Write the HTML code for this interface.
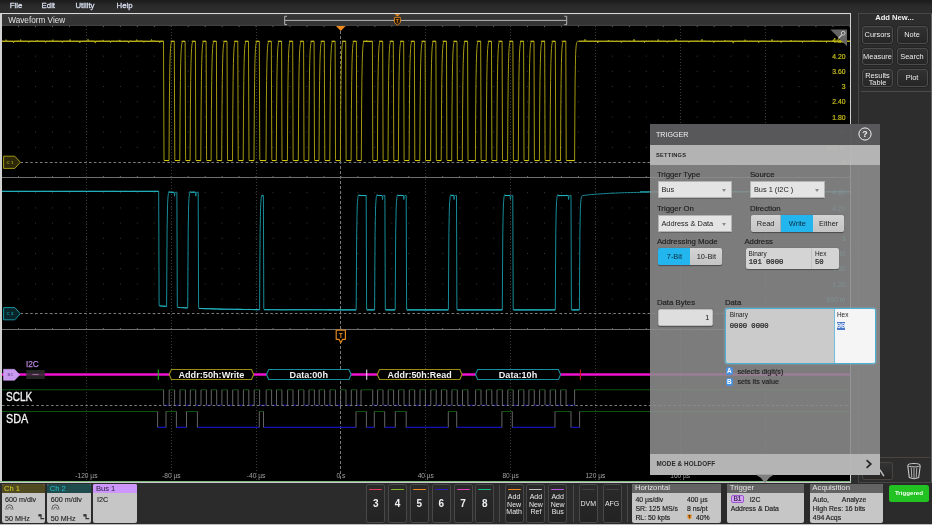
<!DOCTYPE html>
<html lang="en"><head><meta charset="utf-8"><title>Oscilloscope - Trigger</title>
<style>
*{box-sizing:border-box;margin:0;padding:0}
html,body{width:932px;height:525px;overflow:hidden;background:#2c2c2c}
body{position:relative;font-family:"Liberation Sans",sans-serif;color:#e8e8e8;font-size:8px;line-height:1}
.abs{position:absolute}
/* menu */
#menubar{position:absolute;left:0;top:0;width:932px;height:13px;background:linear-gradient(#1b1b1b,#2a2a2a 45%,#2e2e2e)}
#menubar span{position:absolute;top:1.5px;font-size:7.8px;font-weight:normal;-webkit-text-stroke:.3px #d6dcec;color:#d6dcec}
/* waveform view */
#wv{position:absolute;left:0;top:13px;width:851.4px;height:470px;border:1.4px solid #dadada;border-right:1.8px solid #cfcfcf;border-left:2px solid #d2d2d2;border-bottom:none;background:#000}
#wvtitle{position:absolute;left:2px;top:14.4px;width:848px;height:11.6px;background:linear-gradient(#3c3c3c,#343434 25%,#333 85%,#454545)}
#wvtitle span{position:absolute;left:6.3px;top:2.5px;font-size:8.2px;color:#e2e2e2}
#wvbot1{position:absolute;left:0px;top:481px;width:851px;height:1px;background:#7fb87f}
#wvbot2{position:absolute;left:0px;top:482px;width:851px;height:1px;background:#c8c8c8}
/* right panel */
#rp{position:absolute;left:858px;top:13px;width:74px;height:470px;border:1px solid #464646;border-right:1.6px solid #626262;background:#2d2d2d}
#rp .ttl{position:absolute;left:0;top:-0.5px;width:71px;text-align:center;font-size:7.6px;font-weight:bold;color:#f0f0f0}
.rbtn{position:absolute;width:31px;height:17.6px;border:1px solid #4c4c4c;border-radius:3px;background:linear-gradient(#323232,#262626);color:#ececec;font-size:7.4px;text-align:center;line-height:15.6px;box-shadow:0 0 0 .5px #1c1c1c}
.rbtn.two{line-height:7.2px;padding-top:1.5px}
#rpsep1{position:absolute;left:2px;top:77px;width:70px;height:1px;background:#4a4a4a}
#rpsep2{position:absolute;left:0px;top:443.4px;width:71px;height:1px;background:#4a4440}
/* bottom bar */
#bb{position:absolute;left:0;top:483px;width:932px;height:42px;background:#2b2b2b}
#bbline{position:absolute;left:0;top:524px;width:932px;height:1px;background:#bdbdbd}
.badge{position:absolute;top:484px;height:39px;background:#c6c6c6;border-radius:2px;overflow:hidden;color:#222;font-size:7.2px;-webkit-text-stroke:.12px #222}
.badge .hd{position:absolute;left:0;top:0;right:0;height:9px;font-size:7.6px;padding:0.8px 0 0 2.5px;-webkit-text-stroke:0}
.badge .l{position:absolute;left:3.5px;white-space:nowrap}
.nbtn{position:absolute;top:484px;width:19px;height:39px;border:1px solid #484848;border-radius:2.5px;background:linear-gradient(#2a2a2a,#232323);color:#f0f0f0;text-align:center}
.nbtn i{position:absolute;left:2px;right:2px;top:3.6px;height:1.3px;border-radius:1px}
.nbtn b{position:absolute;left:0;right:0;top:13.5px;font-size:10px;font-weight:bold;color:#eef0f4}
.nbtn.t3{font-size:7px;line-height:7.6px}
.nbtn.t3 span{position:absolute;left:-2px;right:-2px;top:8px;color:#e8e8e8}
.nbtn.t1 span{position:absolute;left:-2px;right:-2px;top:15px;font-size:7px;color:#e8e8e8}
.vsep{position:absolute;top:485px;width:1px;height:37px;background:#4a4a4a}
.info{position:absolute;top:484px;height:39px;background:#c6c6c6;border-radius:2px;overflow:hidden;color:#1c1c1c;font-size:6.9px;-webkit-text-stroke:.15px #1c1c1c}
.info .hd{position:absolute;left:0;top:0;right:0;height:8.6px;background:#636363;color:#e6e6e6;font-size:7.8px;padding:0.4px 0 0 2.5px;-webkit-text-stroke:0}
.info .l{position:absolute;white-space:nowrap;margin-top:.8px}
#trigd{position:absolute;left:889px;top:485px;width:40px;height:17px;border-radius:2.5px;background:#23c223;color:#f4fff4;font-weight:bold;font-size:6.2px;text-align:center;line-height:16.5px}
/* trigger panel */
#tp{position:absolute;left:650.4px;top:124px;width:230px;height:350.6px}
#tp .hdr{position:absolute;left:0;top:0;width:230px;height:20.5px;background:rgba(89,89,92,.985)}
#tp .hdr span{position:absolute;left:5.2px;top:6.7px;font-size:8.1px;color:#f2f2f2;transform:scaleX(.875);transform-origin:0 0}
#tp .set{position:absolute;left:0;top:20.5px;width:230px;height:20.5px;background:rgba(183,183,183,.975)}
#tp .set span{position:absolute;left:5.6px;top:8.7px;font-size:5.7px;font-weight:bold;color:#262626;letter-spacing:.22px}
#tp .body{position:absolute;left:0;top:41px;width:230px;height:289px;background:rgba(141,141,141,.88)}
#tp .mh{position:absolute;left:0;top:330px;width:230px;height:20.6px;background:rgba(184,184,184,.975)}
#tp .mh span{position:absolute;left:6px;top:6.6px;font-size:6.3px;font-weight:bold;color:#2a2a2a;letter-spacing:.1px}
.lbl{position:absolute;font-size:7.8px;color:#1a1a1a;white-space:nowrap;-webkit-text-stroke:.12px #1a1a1a}
.dd{position:absolute;height:17px;background:#e4e4e4;border:1px solid #b4b4b4;box-shadow:0 .5px .8px rgba(0,0,0,.2);font-size:7.4px;color:#1c1c1c;line-height:15px;padding-left:2.5px;white-space:nowrap}
.dd:after{content:"";position:absolute;right:5px;top:6.5px;border-left:2.2px solid transparent;border-right:2.2px solid transparent;border-top:3.4px solid #8a8a8a}
.seg{position:absolute;height:17.2px;display:flex;border-radius:2px;overflow:hidden;box-shadow:0 .5px 1px rgba(0,0,0,.4)}
.seg div{height:17.2px;background:linear-gradient(#d4d4d4,#c4c4c4);color:#222;font-size:7.4px;text-align:center;line-height:17.4px;border-right:1px solid #aaa}
.seg div.on{background:#22b5ee;color:#0c2c3c;border-right:none}
.seg div:last-child{border-right:none}
.fld{position:absolute;background:#d4d4d4;border-radius:2px;box-shadow:0 .5px 1px rgba(0,0,0,.35)}
.mono{font-family:"Liberation Mono",monospace;-webkit-text-stroke:.2px #1a1a1a}

#root{position:absolute;left:0;top:0;width:932px;height:525px;will-change:transform;transform:translateZ(0)}

</style></head>
<body>
<div id="root">
<div id="menubar"><span style="left:9.8px">File</span><span style="left:41.6px">Edit</span><span style="left:75.4px">Utility</span><span style="left:116.6px">Help</span></div>
<div id="wv"></div>
<div id="wvtitle"><span>Waveform View</span></div>
<svg class="abs" style="left:270px;top:13px" width="320" height="14" viewBox="270 13 320 14">
<path d="M287 16.3 H284.7 V24.6 H287 M284.7 20.4 H566.7 M564.4 16.3 H566.7 V24.6 H564.4" fill="none" stroke="#b4b4b4" stroke-width="1"/>
<path d="M394.6 14.2 H400.2 L397.4 16.6 Z" fill="#f08a1c"/>
<path d="M394.4 17.4 H400.4 V22.6 L397.4 25 L394.4 22.6 Z" fill="#241808" stroke="#e2861c" stroke-width="0.9" stroke-linejoin="round"/>
<text x="397.4" y="22.6" text-anchor="middle" font-family="Liberation Sans, sans-serif" font-weight="bold" font-size="5" fill="#e2861c">T</text>
</svg>
<svg class="plot" width="848" height="456" viewBox="2 26 848 456" style="position:absolute;left:2px;top:26px">
<rect x="1" y="26" width="850" height="456" fill="#000"/>
<path d="M1.1 41 H851" stroke="#3a3a3a" stroke-width="1" stroke-dasharray="1 15.966" fill="none"/>
<path d="M1.1 56.2 H851" stroke="#3a3a3a" stroke-width="1" stroke-dasharray="1 15.966" fill="none"/>
<path d="M1.1 71.3 H851" stroke="#3a3a3a" stroke-width="1" stroke-dasharray="1 15.966" fill="none"/>
<path d="M1.1 86.5 H851" stroke="#3a3a3a" stroke-width="1" stroke-dasharray="1 15.966" fill="none"/>
<path d="M1.1 101.8 H851" stroke="#3a3a3a" stroke-width="1" stroke-dasharray="1 15.966" fill="none"/>
<path d="M1.1 117 H851" stroke="#3a3a3a" stroke-width="1" stroke-dasharray="1 15.966" fill="none"/>
<path d="M1.1 132.2 H851" stroke="#3a3a3a" stroke-width="1" stroke-dasharray="1 15.966" fill="none"/>
<path d="M1.1 147.3 H851" stroke="#3a3a3a" stroke-width="1" stroke-dasharray="1 15.966" fill="none"/>
<path d="M1.1 162.6 H851" stroke="#3a3a3a" stroke-width="1" stroke-dasharray="1 15.966" fill="none"/>
<path d="M1.1 192.7 H851" stroke="#3a3a3a" stroke-width="1" stroke-dasharray="1 15.966" fill="none"/>
<path d="M1.1 207.9 H851" stroke="#3a3a3a" stroke-width="1" stroke-dasharray="1 15.966" fill="none"/>
<path d="M1.1 223.1 H851" stroke="#3a3a3a" stroke-width="1" stroke-dasharray="1 15.966" fill="none"/>
<path d="M1.1 238.3 H851" stroke="#3a3a3a" stroke-width="1" stroke-dasharray="1 15.966" fill="none"/>
<path d="M1.1 253.5 H851" stroke="#3a3a3a" stroke-width="1" stroke-dasharray="1 15.966" fill="none"/>
<path d="M1.1 268.7 H851" stroke="#3a3a3a" stroke-width="1" stroke-dasharray="1 15.966" fill="none"/>
<path d="M1.1 283.9 H851" stroke="#3a3a3a" stroke-width="1" stroke-dasharray="1 15.966" fill="none"/>
<path d="M1.1 299.1 H851" stroke="#3a3a3a" stroke-width="1" stroke-dasharray="1 15.966" fill="none"/>
<path d="M1.1 314.3 H851" stroke="#3a3a3a" stroke-width="1" stroke-dasharray="1 15.966" fill="none"/>
<path d="M1.1 26.6 H851" stroke="#6a6a6a" stroke-width="1" stroke-dasharray="1 15.966" fill="none"/>
<path d="M1.1 176.6 H851" stroke="#6a6a6a" stroke-width="1" stroke-dasharray="1 15.966" fill="none"/>
<path d="M1.1 328.6 H851" stroke="#6a6a6a" stroke-width="1" stroke-dasharray="1 15.966" fill="none"/>
<path d="M86.5 26 V482" stroke="#3a3a3a" stroke-width="1" stroke-dasharray="1 2" fill="none"/>
<path d="M171.5 26 V482" stroke="#3a3a3a" stroke-width="1" stroke-dasharray="1 2" fill="none"/>
<path d="M256.5 26 V482" stroke="#3a3a3a" stroke-width="1" stroke-dasharray="1 2" fill="none"/>
<path d="M425.5 26 V482" stroke="#3a3a3a" stroke-width="1" stroke-dasharray="1 2" fill="none"/>
<path d="M510.5 26 V482" stroke="#3a3a3a" stroke-width="1" stroke-dasharray="1 2" fill="none"/>
<path d="M595.5 26 V482" stroke="#3a3a3a" stroke-width="1" stroke-dasharray="1 2" fill="none"/>
<path d="M680.5 26 V482" stroke="#3a3a3a" stroke-width="1" stroke-dasharray="1 2" fill="none"/>
<path d="M765.5 26 V482" stroke="#3a3a3a" stroke-width="1" stroke-dasharray="1 2" fill="none"/>
<path d="M340.5 26 V482" stroke="#7a7a7a" stroke-width="1" stroke-dasharray="3 2" fill="none"/>
<path d="M1 177.5 H851" stroke="#6e6e6e" stroke-width="1.2" fill="none"/>
<path d="M1 329.5 H851" stroke="#6e6e6e" stroke-width="1.2" fill="none"/>
<path d="M20.4 162.5 H851" stroke="#7c7c7c" stroke-width="1" stroke-dasharray="2.6 2.3" fill="none"/>
<path d="M20.4 313.5 H851" stroke="#7c7c7c" stroke-width="1" stroke-dasharray="2.6 2.3" fill="none"/>
<path d="M2 374.5 H851" stroke="#f010d0" stroke-width="2.4" fill="none"/>
<path d="M2 389.8 H163.6 M169.2 389.8 H174.6 M180 389.8 H185.4 M190.3 389.8 H195.7 M201 389.8 H206.4 M211.3 389.8 H216.7 M221.9 389.8 H227.3 M232.7 389.8 H238.1 M243.4 389.8 H248.8 M254.2 389.8 H259.6 M266.2 389.8 H271.6 M276.5 389.8 H281.9 M287.6 389.8 H293 M298.5 389.8 H303.9 M309 389.8 H314.4 M319.2 389.8 H324.6 M330 389.8 H335.4 M340.6 389.8 H346 M351.3 389.8 H356.7 M361 389.8 H372.7 M377.6 389.8 H383 M388.2 389.8 H393.6 M398.6 389.8 H404 M409.3 389.8 H414.7 M420 389.8 H425.4 M430.8 389.8 H436.2 M441.4 389.8 H446.8 M451.9 389.8 H457.3 M462.5 389.8 H467.9 M475.6 389.8 H481 M486.4 389.8 H491.8 M497 389.8 H502.4 M507.8 389.8 H513.2 M518.5 389.8 H523.9 M528.9 389.8 H534.3 M539.6 389.8 H545 M550.2 389.8 H555.6 M560.7 389.8 H566.1 M574.6 389.8 H850" stroke="#0b540b" stroke-width="1.1" fill="none"/>
<path d="M163.6 405.2 H169.2 M174.6 405.2 H180 M185.4 405.2 H190.3 M195.7 405.2 H201 M206.4 405.2 H211.3 M216.7 405.2 H221.9 M227.3 405.2 H232.7 M238.1 405.2 H243.4 M248.8 405.2 H254.2 M259.6 405.2 H266.2 M271.6 405.2 H276.5 M281.9 405.2 H287.6 M293 405.2 H298.5 M303.9 405.2 H309 M314.4 405.2 H319.2 M324.6 405.2 H330 M335.4 405.2 H340.6 M346 405.2 H351.3 M356.7 405.2 H361 M372.7 405.2 H377.6 M383 405.2 H388.2 M393.6 405.2 H398.6 M404 405.2 H409.3 M414.7 405.2 H420 M425.4 405.2 H430.8 M436.2 405.2 H441.4 M446.8 405.2 H451.9 M457.3 405.2 H462.5 M467.9 405.2 H475.6 M481 405.2 H486.4 M491.8 405.2 H497 M502.4 405.2 H507.8 M513.2 405.2 H518.5 M523.9 405.2 H528.9 M534.3 405.2 H539.6 M545 405.2 H550.2 M555.6 405.2 H560.7 M566.1 405.2 H574.6" stroke="#1212b8" stroke-width="1.1" fill="none"/>
<path d="M163.6 389.8 V405.2 M169.2 389.8 V405.2 M174.6 389.8 V405.2 M180 389.8 V405.2 M185.4 389.8 V405.2 M190.3 389.8 V405.2 M195.7 389.8 V405.2 M201 389.8 V405.2 M206.4 389.8 V405.2 M211.3 389.8 V405.2 M216.7 389.8 V405.2 M221.9 389.8 V405.2 M227.3 389.8 V405.2 M232.7 389.8 V405.2 M238.1 389.8 V405.2 M243.4 389.8 V405.2 M248.8 389.8 V405.2 M254.2 389.8 V405.2 M259.6 389.8 V405.2 M266.2 389.8 V405.2 M271.6 389.8 V405.2 M276.5 389.8 V405.2 M281.9 389.8 V405.2 M287.6 389.8 V405.2 M293 389.8 V405.2 M298.5 389.8 V405.2 M303.9 389.8 V405.2 M309 389.8 V405.2 M314.4 389.8 V405.2 M319.2 389.8 V405.2 M324.6 389.8 V405.2 M330 389.8 V405.2 M335.4 389.8 V405.2 M340.6 389.8 V405.2 M346 389.8 V405.2 M351.3 389.8 V405.2 M356.7 389.8 V405.2 M361 389.8 V405.2 M372.7 389.8 V405.2 M377.6 389.8 V405.2 M383 389.8 V405.2 M388.2 389.8 V405.2 M393.6 389.8 V405.2 M398.6 389.8 V405.2 M404 389.8 V405.2 M409.3 389.8 V405.2 M414.7 389.8 V405.2 M420 389.8 V405.2 M425.4 389.8 V405.2 M430.8 389.8 V405.2 M436.2 389.8 V405.2 M441.4 389.8 V405.2 M446.8 389.8 V405.2 M451.9 389.8 V405.2 M457.3 389.8 V405.2 M462.5 389.8 V405.2 M467.9 389.8 V405.2 M475.6 389.8 V405.2 M481 389.8 V405.2 M486.4 389.8 V405.2 M491.8 389.8 V405.2 M497 389.8 V405.2 M502.4 389.8 V405.2 M507.8 389.8 V405.2 M513.2 389.8 V405.2 M518.5 389.8 V405.2 M523.9 389.8 V405.2 M528.9 389.8 V405.2 M534.3 389.8 V405.2 M539.6 389.8 V405.2 M545 389.8 V405.2 M550.2 389.8 V405.2 M555.6 389.8 V405.2 M560.7 389.8 V405.2 M566.1 389.8 V405.2 M574.6 389.8 V405.2" stroke="#767676" stroke-width="0.85" fill="none"/>
<path d="M2 405.5 H851" stroke="#7c7c7c" stroke-width="1" stroke-dasharray="2.6 2.3" fill="none"/>
<path d="M2 411.5 H157.6 M166 411.5 H176.4 M186.5 411.5 H197.4 M259.3 411.5 H263.5 M356 411.5 H366.4 M374.3 411.5 H384.7 M395.3 411.5 H406.2 M448.3 411.5 H456.7 M501.9 411.5 H512.3 M555 411.5 H571 M579.6 411.5 H850" stroke="#0b540b" stroke-width="1.1" fill="none"/>
<path d="M157.6 427.4 H166 M176.4 427.4 H186.5 M197.4 427.4 H259.3 M263.5 427.4 H356 M366.4 427.4 H374.3 M384.7 427.4 H395.3 M406.2 427.4 H448.3 M456.7 427.4 H501.9 M512.3 427.4 H555 M571 427.4 H579.6" stroke="#1212b8" stroke-width="1.1" fill="none"/>
<path d="M157.6 411.5 V427.4 M166 411.5 V427.4 M176.4 411.5 V427.4 M186.5 411.5 V427.4 M197.4 411.5 V427.4 M259.3 411.5 V427.4 M263.5 411.5 V427.4 M356 411.5 V427.4 M366.4 411.5 V427.4 M374.3 411.5 V427.4 M384.7 411.5 V427.4 M395.3 411.5 V427.4 M406.2 411.5 V427.4 M448.3 411.5 V427.4 M456.7 411.5 V427.4 M501.9 411.5 V427.4 M512.3 411.5 V427.4 M555 411.5 V427.4 M571 411.5 V427.4 M579.6 411.5 V427.4" stroke="#767676" stroke-width="0.85" fill="none"/>
<path d="M169.2 374.5 L171.4 369.5 L251.5 369.5 L253.7 374.5 L251.5 379.5 L171.4 379.5 Z" fill="#000" stroke="#988e12" stroke-width="1.1" stroke-linejoin="round"/>
<text x="211.4" y="377.7" text-anchor="middle" font-family="Liberation Sans, sans-serif" font-weight="bold" font-size="8.9" textLength="66" lengthAdjust="spacingAndGlyphs" fill="#f2f2f2">Addr:50h:Write</text>
<path d="M266.5 374.5 L268.7 369.5 L348.9 369.5 L351.1 374.5 L348.9 379.5 L268.7 379.5 Z" fill="#000" stroke="#168e9c" stroke-width="1.1" stroke-linejoin="round"/>
<text x="308.8" y="377.7" text-anchor="middle" font-family="Liberation Sans, sans-serif" font-weight="bold" font-size="8.9" textLength="38.4" lengthAdjust="spacingAndGlyphs" fill="#f2f2f2">Data:00h</text>
<path d="M377.3 374.5 L379.5 369.5 L459.8 369.5 L462 374.5 L459.8 379.5 L379.5 379.5 Z" fill="#000" stroke="#988e12" stroke-width="1.1" stroke-linejoin="round"/>
<text x="419.6" y="377.7" text-anchor="middle" font-family="Liberation Sans, sans-serif" font-weight="bold" font-size="8.9" textLength="64" lengthAdjust="spacingAndGlyphs" fill="#f2f2f2">Addr:50h:Read</text>
<path d="M475.5 374.5 L477.7 369.5 L558.4 369.5 L560.6 374.5 L558.4 379.5 L477.7 379.5 Z" fill="#000" stroke="#168e9c" stroke-width="1.1" stroke-linejoin="round"/>
<text x="518" y="377.7" text-anchor="middle" font-family="Liberation Sans, sans-serif" font-weight="bold" font-size="8.9" textLength="38.4" lengthAdjust="spacingAndGlyphs" fill="#f2f2f2">Data:10h</text>
<path d="M158.3 369.4 V379.8" stroke="#18b018" stroke-width="1.1"/>
<path d="M366.7 369.4 V379.8" stroke="#e8d0e8" stroke-width="1.1"/>
<path d="M580.4 369.4 V379.8" stroke="#d01818" stroke-width="1.1"/>
<path d="M2 41.2 L3 41.1 L4 41.3 L5 41.3 L5.5 41.2 L6 41.1 L6 39.7 L6.5 41.2 L7 41.2 L8 41.2 L9 41.3 L10 41.3 L11 41.1 L12 41.4 L13 41.2 L13 41.1 L13.5 42.9 L14 41.2 L14 41.2 L15 41.3 L16 41.1 L17 41.2 L18 41 L19 41.3 L20 41.3 L20.2 41.2 L20.7 39.6 L21 41.2 L21.2 41.2 L22 41.3 L23 41.1 L24 41.3 L25 41.2 L26 41.2 L27 41.2 L28 41.3 L28.3 41.2 L28.8 42.4 L29 41.4 L29.3 41.2 L30 41.2 L31 41.3 L32 41 L33 41.3 L34 41.3 L35 41.4 L36 41.3 L36.8 41.2 L37 41.1 L37.3 40 L37.8 41.2 L38 41.2 L39 41.3 L40 41 L41 41.2 L42 41.1 L43 41.1 L44 41 L45 41.3 L45.1 41.2 L45.6 42.5 L46 41.1 L46.1 41.2 L47 41.1 L48 41.2 L49 41.3 L50 41 L51 41.2 L52 41.2 L52.4 41.2 L52.9 39.7 L53 41.3 L53.4 41.2 L54 41.3 L55 41.3 L56 41.1 L57 41.2 L58 41.1 L59 41.3 L60 41.4 L61 41.1 L61.8 41.2 L62 41.1 L62.3 42.5 L62.8 41.2 L63 41.1 L64 41.1 L65 41.2 L66 41.2 L67 41.1 L68 41 L69 41.2 L69.5 41.2 L70 41.2 L70 39.5 L70.5 41.2 L71 41.2 L72 41.4 L73 41.3 L74 41.2 L75 41.2 L76 41.3 L77 41 L78 41.3 L79 41.3 L79.4 41.2 L79.9 42.9 L80 41.3 L80.4 41.2 L81 41.3 L82 41.2 L83 41.2 L84 41.1 L85 41.2 L86 41 L87 41 L87.5 41.2 L88 41.1 L88 39.2 L88.5 41.2 L89 41.1 L90 41.1 L91 41 L92 41 L93 41.1 L94 41.1 L94.7 41.2 L95 41.2 L95.2 43.1 L95.7 41.2 L96 41 L97 41.3 L98 41.2 L99 41.1 L100 41.1 L101 41.1 L102 41.2 L102.6 41.2 L103 41.1 L103.1 39.9 L103.6 41.2 L104 41.3 L105 41.4 L106 41.2 L107 41.2 L108 41.1 L109 41.1 L109.9 41.2 L110 41.1 L110.4 42.6 L110.9 41.2 L111 41.1 L112 41.3 L113 41.1 L114 41 L115 41.4 L116 41.2 L117 41.1 L118 41.2 L119 41 L119.4 41.2 L119.9 39.9 L120 41.2 L120.4 41.2 L121 41.4 L122 41.3 L123 41.3 L124 41.1 L125 41.2 L126 41.1 L127 41.3 L128 41.2 L128.1 41.2 L128.6 42.9 L129 41.3 L129.1 41.2 L130 41.1 L131 41.1 L132 41.3 L133 41.4 L134 41.3 L135 41.3 L136 41.3 L136.2 41.2 L136.7 39.6 L137 41.3 L137.2 41.2 L138 41.1 L139 41.2 L140 41.1 L141 41 L142 41 L143 41.1 L143.4 41.2 L143.9 42.4 L144 41.1 L144.4 41.2 L145 41.3 L146 41.4 L147 41.2 L148 41.4 L149 41.4 L150 41.4 L151 41.2 L151 41.2 L151.5 39.5 L152 41.1 L152 41.2 L153 41.1 L154 41.1 L155 41.1 L156 41.2 L157 41.3 L158 41.3 L159 41.2 L159.3 41.2 L159.8 42.7 L160 41.3 L160.3 41.2 L161 41.3 L162 41.1 L163 41.3 L163.4 41.2 L163.5 41.2 L164 160 L164.3 160.5 L168.8 160.7 L169 160.5 L169.3 109.8 L169.6 80.6 L169.9 63.7 L170.2 54 L170.5 48.4 L170.8 45.1 L171.1 43.3 L171.4 42.2 L171.7 41.6 L172 41.2 L174.3 41.5 L174.8 159.5 L175 160.5 L179.6 160.7 L179.8 160.5 L180.1 109.8 L180.4 80.6 L180.7 63.7 L181 54 L181.3 48.4 L181.6 45.1 L181.9 43.3 L182.2 42.2 L182.5 41.6 L182.8 41.2 L185.1 41.5 L185.6 159.5 L185.8 160.5 L189.9 160.7 L190.1 160.5 L190.4 109.8 L190.7 80.6 L191 63.7 L191.3 54 L191.6 48.4 L191.9 45.1 L192.2 43.3 L192.5 42.2 L192.8 41.6 L193.1 41.2 L195.4 41.5 L195.8 159.5 L196.1 160.5 L200.6 160.7 L200.8 160.5 L201.1 109.8 L201.4 80.6 L201.7 63.7 L202 54 L202.3 48.4 L202.6 45.1 L202.9 43.3 L203.2 42.2 L203.5 41.6 L203.8 41.2 L206.1 41.5 L206.6 159.5 L206.8 160.5 L210.9 160.7 L211.1 160.5 L211.4 109.8 L211.7 80.6 L212 63.7 L212.3 54 L212.6 48.4 L212.9 45.1 L213.2 43.3 L213.5 42.2 L213.8 41.6 L214.1 41.2 L216.4 41.5 L216.8 159.5 L217.1 160.5 L221.5 160.7 L221.7 160.5 L222 109.8 L222.3 80.6 L222.6 63.7 L222.9 54 L223.2 48.4 L223.5 45.1 L223.8 43.3 L224.1 42.2 L224.4 41.6 L224.7 41.2 L227 41.5 L227.5 159.5 L227.7 160.5 L232.3 160.7 L232.5 160.5 L232.8 109.8 L233.1 80.6 L233.4 63.7 L233.7 54 L234 48.4 L234.3 45.1 L234.6 43.3 L234.9 42.2 L235.2 41.6 L235.5 41.2 L237.8 41.5 L238.2 159.5 L238.5 160.5 L243 160.7 L243.2 160.5 L243.5 109.8 L243.8 80.6 L244.1 63.7 L244.4 54 L244.7 48.4 L245 45.1 L245.3 43.3 L245.6 42.2 L245.9 41.6 L246.2 41.2 L248.5 41.5 L249 159.5 L249.2 160.5 L253.8 160.7 L254 160.5 L254.3 109.8 L254.6 80.6 L254.9 63.7 L255.2 54 L255.5 48.4 L255.8 45.1 L256.1 43.3 L256.4 42.2 L256.7 41.6 L257 41.2 L259.3 41.5 L259.8 159.5 L260 160.5 L265.8 160.7 L266 160.5 L266.3 109.8 L266.6 80.6 L266.9 63.7 L267.2 54 L267.5 48.4 L267.8 45.1 L268.1 43.3 L268.4 42.2 L268.7 41.6 L269 41.2 L271.3 41.5 L271.8 159.5 L272 160.5 L276.1 160.7 L276.3 160.5 L276.6 109.8 L276.9 80.6 L277.2 63.7 L277.5 54 L277.8 48.4 L278.1 45.1 L278.4 43.3 L278.7 42.2 L279 41.6 L279.3 41.2 L281.6 41.5 L282 159.5 L282.3 160.5 L287.2 160.7 L287.4 160.5 L287.7 109.8 L288 80.6 L288.3 63.7 L288.6 54 L288.9 48.4 L289.2 45.1 L289.5 43.3 L289.8 42.2 L290.1 41.6 L290.4 41.2 L292.7 41.5 L293.1 159.5 L293.4 160.5 L298.1 160.7 L298.3 160.5 L298.6 109.8 L298.9 80.6 L299.2 63.7 L299.5 54 L299.8 48.4 L300.1 45.1 L300.4 43.3 L300.7 42.2 L301 41.6 L301.3 41.2 L303.6 41.5 L304 159.5 L304.3 160.5 L308.6 160.7 L308.8 160.5 L309.1 109.8 L309.4 80.6 L309.7 63.7 L310 54 L310.3 48.4 L310.6 45.1 L310.9 43.3 L311.2 42.2 L311.5 41.6 L311.8 41.2 L314.1 41.5 L314.5 159.5 L314.8 160.5 L318.8 160.7 L319 160.5 L319.3 109.8 L319.6 80.6 L319.9 63.7 L320.2 54 L320.5 48.4 L320.8 45.1 L321.1 43.3 L321.4 42.2 L321.7 41.6 L322 41.2 L324.3 41.5 L324.8 159.5 L325 160.5 L329.6 160.7 L329.8 160.5 L330.1 109.8 L330.4 80.6 L330.7 63.7 L331 54 L331.3 48.4 L331.6 45.1 L331.9 43.3 L332.2 42.2 L332.5 41.6 L332.8 41.2 L335.1 41.5 L335.5 159.5 L335.8 160.5 L340.2 160.7 L340.4 160.5 L340.7 109.8 L341 80.6 L341.3 63.7 L341.6 54 L341.9 48.4 L342.2 45.1 L342.5 43.3 L342.8 42.2 L343.1 41.6 L343.4 41.2 L345.7 41.5 L346.1 159.5 L346.4 160.5 L350.9 160.7 L351.1 160.5 L351.4 109.8 L351.7 80.6 L352 63.7 L352.3 54 L352.6 48.4 L352.9 45.1 L353.2 43.3 L353.5 42.2 L353.8 41.6 L354.1 41.2 L356.4 41.5 L356.8 159.5 L357.1 160.5 L361.1 160.7 L361.3 160.5 L361.6 109.8 L361.9 80.6 L362.2 63.7 L362.5 54 L362.8 48.4 L363.1 45.1 L363.4 43.3 L363.7 42.2 L364 41.6 L364.3 41.2 L366 41.6 L366.6 40.4 L367.2 41.7 L372.4 41.5 L372.8 159.5 L373.1 160.5 L377.2 160.7 L377.4 160.5 L377.7 109.8 L378 80.6 L378.3 63.7 L378.6 54 L378.9 48.4 L379.2 45.1 L379.5 43.3 L379.8 42.2 L380.1 41.6 L380.4 41.2 L382.7 41.5 L383.1 159.5 L383.4 160.5 L387.8 160.7 L388 160.5 L388.3 109.8 L388.6 80.6 L388.9 63.7 L389.2 54 L389.5 48.4 L389.8 45.1 L390.1 43.3 L390.4 42.2 L390.7 41.6 L391 41.2 L393.3 41.5 L393.8 159.5 L394 160.5 L398.2 160.7 L398.4 160.5 L398.7 109.8 L399 80.6 L399.3 63.7 L399.6 54 L399.9 48.4 L400.2 45.1 L400.5 43.3 L400.8 42.2 L401.1 41.6 L401.4 41.2 L403.7 41.5 L404.1 159.5 L404.4 160.5 L408.9 160.7 L409.1 160.5 L409.4 109.8 L409.7 80.6 L410 63.7 L410.3 54 L410.6 48.4 L410.9 45.1 L411.2 43.3 L411.5 42.2 L411.8 41.6 L412.1 41.2 L414.4 41.5 L414.8 159.5 L415.1 160.5 L419.6 160.7 L419.8 160.5 L420.1 109.8 L420.4 80.6 L420.7 63.7 L421 54 L421.3 48.4 L421.6 45.1 L421.9 43.3 L422.2 42.2 L422.5 41.6 L422.8 41.2 L425.1 41.5 L425.5 159.5 L425.8 160.5 L430.4 160.7 L430.6 160.5 L430.9 109.8 L431.2 80.6 L431.5 63.7 L431.8 54 L432.1 48.4 L432.4 45.1 L432.7 43.3 L433 42.2 L433.3 41.6 L433.6 41.2 L435.9 41.5 L436.3 159.5 L436.6 160.5 L441 160.7 L441.2 160.5 L441.5 109.8 L441.8 80.6 L442.1 63.7 L442.4 54 L442.7 48.4 L443 45.1 L443.3 43.3 L443.6 42.2 L443.9 41.6 L444.2 41.2 L446.5 41.5 L446.9 159.5 L447.2 160.5 L451.5 160.7 L451.7 160.5 L452 109.8 L452.3 80.6 L452.6 63.7 L452.9 54 L453.2 48.4 L453.5 45.1 L453.8 43.3 L454.1 42.2 L454.4 41.6 L454.7 41.2 L457 41.5 L457.4 159.5 L457.7 160.5 L462.1 160.7 L462.3 160.5 L462.6 109.8 L462.9 80.6 L463.2 63.7 L463.5 54 L463.8 48.4 L464.1 45.1 L464.4 43.3 L464.7 42.2 L465 41.6 L465.3 41.2 L467.6 41.5 L468 159.5 L468.3 160.5 L475.2 160.7 L475.4 160.5 L475.7 109.8 L476 80.6 L476.3 63.7 L476.6 54 L476.9 48.4 L477.2 45.1 L477.5 43.3 L477.8 42.2 L478.1 41.6 L478.4 41.2 L480.7 41.5 L481.1 159.5 L481.4 160.5 L486 160.7 L486.2 160.5 L486.5 109.8 L486.8 80.6 L487.1 63.7 L487.4 54 L487.7 48.4 L488 45.1 L488.3 43.3 L488.6 42.2 L488.9 41.6 L489.2 41.2 L491.5 41.5 L491.9 159.5 L492.2 160.5 L496.6 160.7 L496.8 160.5 L497.1 109.8 L497.4 80.6 L497.7 63.7 L498 54 L498.3 48.4 L498.6 45.1 L498.9 43.3 L499.2 42.2 L499.5 41.6 L499.8 41.2 L502.1 41.5 L502.5 159.5 L502.8 160.5 L507.4 160.7 L507.6 160.5 L507.9 109.8 L508.2 80.6 L508.5 63.7 L508.8 54 L509.1 48.4 L509.4 45.1 L509.7 43.3 L510 42.2 L510.3 41.6 L510.6 41.2 L512.9 41.5 L513.4 159.5 L513.6 160.5 L518.1 160.7 L518.3 160.5 L518.6 109.8 L518.9 80.6 L519.2 63.7 L519.5 54 L519.8 48.4 L520.1 45.1 L520.4 43.3 L520.7 42.2 L521 41.6 L521.3 41.2 L523.6 41.5 L524 159.5 L524.3 160.5 L528.5 160.7 L528.7 160.5 L529 109.8 L529.3 80.6 L529.6 63.7 L529.9 54 L530.2 48.4 L530.5 45.1 L530.8 43.3 L531.1 42.2 L531.4 41.6 L531.7 41.2 L534 41.5 L534.4 159.5 L534.7 160.5 L539.2 160.7 L539.4 160.5 L539.7 109.8 L540 80.6 L540.3 63.7 L540.6 54 L540.9 48.4 L541.2 45.1 L541.5 43.3 L541.8 42.2 L542.1 41.6 L542.4 41.2 L544.7 41.5 L545.1 159.5 L545.4 160.5 L549.8 160.7 L550 160.5 L550.3 109.8 L550.6 80.6 L550.9 63.7 L551.2 54 L551.5 48.4 L551.8 45.1 L552.1 43.3 L552.4 42.2 L552.7 41.6 L553 41.2 L555.3 41.5 L555.8 159.5 L556 160.5 L560.3 160.7 L560.5 160.5 L560.8 109.8 L561.1 80.6 L561.4 63.7 L561.7 54 L562 48.4 L562.3 45.1 L562.6 43.3 L562.9 42.2 L563.2 41.6 L563.5 41.2 L565.8 41.5 L566.2 159.5 L566.5 160.5 L574.4 160.7 L574.6 160.5 L574.9 110.1 L575.1 81 L575.4 64.2 L575.6 54.5 L575.9 48.9 L576.2 45.7 L576.4 43.8 L576.7 42.8 L576.9 42.2 L577.2 41.8 L577.6 41.2 L578.6 41.4 L579.6 41.2 L580.6 41.2 L581.6 41.2 L582.6 41 L583.6 41.2 L584.5 41.2 L584.6 41.1 L585 39.3 L585.5 41.2 L585.6 41 L586.6 41.3 L587.6 41.1 L588.6 41.2 L589.6 41.3 L590.6 41.2 L591.6 41.1 L592.6 41.2 L593.6 41.2 L594.6 41.3 L595.6 41.1 L596.6 41.2 L597.2 41.2 L597.6 41.1 L597.7 43 L598.2 41.2 L598.6 41.1 L599.6 41.3 L600.6 41.2 L601.6 41.2 L602.6 41.3 L603.6 41.3 L604.6 41.2 L605.6 41.2 L606.6 41.2 L607.6 41.2 L608.1 41.2 L608.6 40 L608.6 41.3 L609.1 41.2 L609.6 41.2 L610.6 41.2 L611.6 41.2 L612.6 41.4 L613.6 41.3 L614.6 41.3 L615.6 41.4 L616.6 41.1 L617.6 41.2 L618.6 41.4 L619.6 41.3 L620.6 41.1 L620.8 41.2 L621.3 42.5 L621.6 41.1 L621.8 41.2 L622.6 41.2 L623.6 41 L624.6 41.1 L625.6 41 L626.6 41.3 L627.6 41.3 L628.6 41.3 L629.6 41.1 L630.6 41.3 L631.6 41.3 L632.6 41.1 L633.6 41.3 L633.6 41.2 L634.1 39.2 L634.6 41.4 L634.6 41.2 L635.6 41.1 L636.6 41.4 L637.6 41.2 L638.6 41.2 L639.6 41.4 L640.6 41.3 L641.6 41.1 L642.6 41.2 L643.6 41.2 L644 41.2 L644.5 42.6 L644.6 41.1 L645 41.2 L645.6 41.1 L646.6 41.1 L647.6 41.3 L648.6 41 L649.6 41.2 L650.6 41.2 L651.6 41 L652.6 41.1 L653.6 41.2 L654.6 41.2 L655.6 41 L656.6 41.4 L657.6 41.3 L657.7 41.2 L658.2 39.5 L658.6 41.4 L658.7 41.2 L659.6 41.1 L660.6 41.1 L661.6 41 L662.6 41.3 L663.6 41.1 L664.6 41.1 L665.6 41.2 L666.6 41.3 L666.7 41.2 L667.2 42.3 L667.6 41.3 L667.7 41.2 L668.6 41.1 L669.6 41.1 L670.6 41.4 L671.6 41.2 L672.6 41.3 L673.6 41.1 L674.6 41 L675.6 41.2 L675.6 41.3 L676.1 39.3 L676.6 41.2 L676.6 41.2 L677.6 41 L678.6 41.4 L679.6 41.2 L680.6 41.3 L681.6 41.1 L682.6 41.3 L683.6 41 L684.6 41.3 L685.6 41.2 L686.6 41.1 L687.6 41.2 L688.4 41.2 L688.6 41.4 L688.9 42.3 L689.4 41.2 L689.6 41.1 L690.6 41.1 L691.6 41.2 L692.6 41.1 L693.6 41.1 L694.6 41.1 L695.6 41 L696.6 41.1 L697.6 41.1 L698.6 41.1 L699.6 41.3 L700.6 41.1 L701.4 41.2 L701.6 41.2 L701.9 39.2 L702.4 41.2 L702.6 41.1 L703.6 41.1 L704.6 41 L705.6 41.1 L706.6 41 L707.6 41.3 L708.6 41.2 L709.6 41.1 L710.6 41.2 L711.6 41.4 L712.6 41.1 L713.3 41.2 L713.6 41.3 L713.8 42.6 L714.3 41.2 L714.6 41.2 L715.6 41.2 L716.6 41.3 L717.6 41.2 L718.6 41.2 L719.6 41.3 L720.6 41.4 L721.6 41.1 L722.6 41.3 L723.6 41.3 L724.6 41.2 L724.6 41.2 L725.1 40.1 L725.6 41.2 L725.6 41.2 L726.6 41.1 L727.6 41 L728.6 41.1 L729.6 41 L730.6 41.3 L731.6 41.1 L732.6 41.1 L732.7 41.2 L733.2 43.2 L733.6 41.1 L733.7 41.2 L734.6 41.3 L735.6 41.3 L736.6 41.3 L737.6 41.1 L738.6 41.1 L739.6 41.1 L740.6 41.2 L741.6 41.1 L742.6 41.2 L743.6 41.1 L744.6 41.4 L744.6 41.2 L745.1 39.7 L745.6 41.4 L745.6 41.2 L746.6 41.2 L747.6 41.1 L748.6 41.4 L749.6 41.1 L750.6 41.1 L751.6 41 L752.6 41.2 L753.6 41.2 L754.6 41.2 L755.6 41.1 L756.6 41.2 L757.6 41 L758.2 41.2 L758.6 41.1 L758.7 42.6 L759.2 41.2 L759.6 41.1 L760.6 41.2 L761.6 41 L762.6 41 L763.6 41.1 L764.6 41.1 L765.6 41.2 L766.6 41.2 L767.6 41.3 L768.6 41.3 L769.6 41.3 L770.6 41.3 L771.4 41.2 L771.6 41.2 L771.9 39.4 L772.4 41.2 L772.6 41.1 L773.6 41.4 L774.6 41.1 L775.6 41.3 L776.6 41.3 L777.6 41 L778.6 41.3 L779.6 41.3 L780.6 41.2 L780.7 41.2 L781.2 42.5 L781.6 41.3 L781.7 41.2 L782.6 41.3 L783.6 41.1 L784.6 41.2 L785.6 41.2 L786.6 41.3 L787.6 41.3 L788.6 41.3 L789.6 41.2 L790.5 41.2 L790.6 41.3 L791 40 L791.5 41.2 L791.6 41.3 L792.6 41.3 L793.6 41.1 L794.6 41 L795.6 41.1 L796.6 41.1 L797.6 41.1 L798.6 41.3 L799.6 41.2 L800.6 41.2 L801.6 41.2 L802 41.2 L802.5 42.5 L802.6 41.3 L803 41.2 L803.6 41.2 L804.6 41 L805.6 41.3 L806.6 41.3 L807.6 41.2 L808.6 41.2 L809.6 41.3 L810.6 41 L811.6 41.3 L812.5 41.2 L812.6 41.1 L813 40.1 L813.5 41.2 L813.6 41 L814.6 41.1 L815.6 41.3 L816.6 41.1 L817.6 41.3 L818.6 41.4 L819.6 41.2 L820.6 41.2 L821.6 41.2 L822.6 41.3 L823.6 41.3 L824.6 41.2 L825.6 41.3 L826 41.2 L826.5 42.6 L826.6 41 L827 41.2 L827.6 41.1 L828.6 41.1 L829.6 41.3 L830.6 41.1 L831.6 41.2 L832.6 41 L833.6 41 L834.6 41.1 L835.6 41.3 L836.6 41.3 L836.7 41.2 L837.2 39.6 L837.6 41.3 L837.7 41.2 L838.6 41.1 L839.6 41.2 L840.6 41.2 L841.6 41.2 L842.6 41.1 L843.6 41.3 L844.6 41.1 L845.6 41.4 L846.6 41.4 L847.6 41 L848.6 41.2 L849.6 41.3 L850 41.2" stroke="#a39810" stroke-width="1.0" fill="none" stroke-linejoin="round"/>
<path d="M164.3 160.5 H169 M170.6 41.2 H174.4 M175 160.5 H179.8 M181.4 41.2 H185.2 M185.8 160.5 H190.1 M191.7 41.2 H195.5 M196.1 160.5 H200.8 M202.4 41.2 H206.2 M206.8 160.5 H211.1 M212.7 41.2 H216.5 M217.1 160.5 H221.7 M223.3 41.2 H227.1 M227.7 160.5 H232.5 M234.1 41.2 H237.9 M238.5 160.5 H243.2 M244.8 41.2 H248.6 M249.2 160.5 H254 M255.6 41.2 H259.4 M260 160.5 H266 M267.6 41.2 H271.4 M272 160.5 H276.3 M277.9 41.2 H281.7 M282.3 160.5 H287.4 M289 41.2 H292.8 M293.4 160.5 H298.3 M299.9 41.2 H303.7 M304.3 160.5 H308.8 M310.4 41.2 H314.2 M314.8 160.5 H319 M320.6 41.2 H324.4 M325 160.5 H329.8 M331.4 41.2 H335.2 M335.8 160.5 H340.4 M342 41.2 H345.8 M346.4 160.5 H351.1 M352.7 41.2 H356.5 M357.1 160.5 H361.3 M362.9 41.2 H372.5 M373.1 160.5 H377.4 M379 41.2 H382.8 M383.4 160.5 H388 M389.6 41.2 H393.4 M394 160.5 H398.4 M400 41.2 H403.8 M404.4 160.5 H409.1 M410.7 41.2 H414.5 M415.1 160.5 H419.8 M421.4 41.2 H425.2 M425.8 160.5 H430.6 M432.2 41.2 H436 M436.6 160.5 H441.2 M442.8 41.2 H446.6 M447.2 160.5 H451.7 M453.3 41.2 H457.1 M457.7 160.5 H462.3 M463.9 41.2 H467.7 M468.3 160.5 H475.4 M477 41.2 H480.8 M481.4 160.5 H486.2 M487.8 41.2 H491.6 M492.2 160.5 H496.8 M498.4 41.2 H502.2 M502.8 160.5 H507.6 M509.2 41.2 H513 M513.6 160.5 H518.3 M519.9 41.2 H523.7 M524.3 160.5 H528.7 M530.3 41.2 H534.1 M534.7 160.5 H539.4 M541 41.2 H544.8 M545.4 160.5 H550 M551.6 41.2 H555.4 M556 160.5 H560.5 M562.1 41.2 H565.9 M566.5 160.5 H574.6" stroke="#d2c812" stroke-width="1.15" fill="none"/>
<path d="M2 191.5 L3 191.4 L4 191.3 L5 191.3 L6 191.5 L7 191.3 L8 191.4 L9 191.3 L10 191.4 L11 191.5 L12 191.3 L13 191.5 L14 191.4 L15 191.5 L16 191.4 L17 191.3 L18 191.5 L19 191.4 L20 191.3 L21 191.3 L22 191.4 L23 191.4 L24 191.4 L25 191.3 L26 191.4 L27 191.4 L28 191.5 L29 191.3 L30 191.5 L31 191.5 L32 191.3 L33 191.5 L34 191.5 L35 191.5 L36 191.3 L37 191.4 L38 191.4 L39 191.5 L40 191.4 L41 191.4 L42 191.4 L43 191.3 L44 191.3 L45 191.3 L46 191.5 L47 191.3 L48 191.5 L49 191.3 L50 191.3 L51 191.4 L52 191.3 L53 191.4 L54 191.5 L55 191.5 L56 191.5 L57 191.4 L58 191.5 L59 191.5 L60 191.4 L61 191.5 L62 191.3 L63 191.5 L64 191.4 L65 191.5 L66 191.4 L67 191.3 L68 191.3 L69 191.5 L70 191.3 L71 191.4 L72 191.4 L73 191.4 L74 191.5 L75 191.5 L76 191.3 L77 191.4 L78 191.4 L79 191.4 L80 191.4 L81 191.3 L82 191.3 L83 191.3 L84 191.5 L85 191.4 L86 191.3 L87 191.5 L88 191.5 L89 191.4 L90 191.3 L91 191.3 L92 191.3 L93 191.4 L94 191.3 L95 191.3 L96 191.3 L97 191.4 L98 191.5 L99 191.5 L100 191.4 L101 191.4 L102 191.4 L103 191.4 L104 191.4 L105 191.3 L106 191.3 L107 191.5 L108 191.3 L109 191.4 L110 191.4 L111 191.5 L112 191.3 L113 191.3 L114 191.3 L115 191.4 L116 191.4 L117 191.5 L118 191.5 L119 191.5 L120 191.3 L121 191.3 L122 191.5 L123 191.5 L124 191.4 L125 191.4 L126 191.3 L127 191.4 L128 191.5 L129 191.5 L130 191.5 L131 191.5 L132 191.3 L133 191.3 L134 191.3 L135 191.4 L136 191.4 L137 191.5 L138 191.5 L139 191.4 L140 191.5 L141 191.4 L142 191.4 L143 191.3 L144 191.5 L145 191.3 L146 191.5 L147 191.4 L148 191.4 L149 191.3 L150 191.3 L151 191.4 L152 191.4 L153 191.3 L154 191.3 L155 191.4 L156 191.4 L157 191.4 L158 191.3 L158.6 191.4 L158.7 191.4 L159.1 305.1 L159.4 305.7 L160.4 305.9 L162.4 305.9 L164.4 306.2 L166.4 306.5 L166.6 306.5 L166.9 257.5 L167.1 229.3 L167.4 213 L167.6 203.6 L167.9 198.2 L168.2 195.1 L168.4 193.3 L168.7 192.2 L168.9 191.6 L169.2 191.3 L169.8 192.4 L170.6 192.2 L171.8 192.5 L173 192.3 L174.2 192.4 L174.5 196.2 L174.9 193.2 L175.6 192.2 L176.9 192.2 L177.3 306.5 L177.6 307.3 L178.6 307.5 L180.6 307.5 L182.6 307.6 L184.6 307.7 L186.6 308 L187.5 307.9 L187.7 307.9 L188 258.4 L188.2 229.8 L188.5 213.3 L188.7 203.8 L189 198.3 L189.3 195.1 L189.5 193.3 L189.8 192.3 L190 191.7 L190.3 191.3 L190.9 192.4 L191.7 192.3 L192.9 192.1 L194.1 192 L195.3 192.2 L195.5 192.4 L195.8 196.2 L196.2 193.2 L196.9 192.2 L198.2 192.2 L198.6 307.6 L198.9 308.4 L199.9 308.5 L201.9 308.5 L203.9 308.6 L205.9 308.7 L207.9 308.8 L209.9 308.7 L211.9 308.7 L213.9 308.9 L215.9 308.9 L217.9 309.1 L219.9 309 L221.9 309.2 L223.9 309.2 L225.9 309.2 L227.9 309.1 L229.9 309.4 L231.9 309.2 L233.9 309.4 L235.9 309.3 L237.9 309.3 L239.9 309.5 L241.9 309.4 L243.9 309.6 L245.9 309.5 L247.9 309.4 L249.9 309.4 L251.9 309.5 L253.9 309.6 L255.9 309.7 L257.9 309.5 L259.4 309.6 L259.6 309.6 L259.9 260.9 L260.1 232.8 L260.4 216.5 L260.6 207.2 L260.9 201.8 L261.2 198.7 L261.4 196.9 L261.7 195.8 L261.9 195.2 L262.2 194.9 L262.8 196 L263.4 195.8 L263.8 308.8 L264.1 309.6 L265.1 309.6 L267.1 309.6 L269.1 309.8 L271.1 309.6 L273.1 309.6 L275.1 309.6 L277.1 309.7 L279.1 309.8 L281.1 309.8 L283.1 309.8 L285.1 309.9 L287.1 309.9 L289.1 309.7 L291.1 309.7 L293.1 309.9 L295.1 309.8 L297.1 309.7 L299.1 309.8 L301.1 309.8 L303.1 309.8 L305.1 309.8 L307.1 309.7 L309.1 309.7 L311.1 309.8 L313.1 309.8 L315.1 309.9 L317.1 309.7 L319.1 309.9 L321.1 309.8 L323.1 309.8 L325.1 309.9 L327.1 309.9 L329.1 309.8 L331.1 309.7 L333.1 309.9 L335.1 309.8 L337.1 310 L339.1 309.8 L341.1 309.8 L343.1 310 L345.1 309.8 L347.1 309.8 L349.1 309.9 L351.1 309.9 L353.1 309.8 L355.1 309.8 L356 309.9 L356.2 309.9 L356.5 260.9 L356.7 232.7 L357 216.4 L357.2 207 L357.5 201.5 L357.8 198.4 L358 196.6 L358.3 195.5 L358.5 194.9 L358.8 194.6 L359.4 195.7 L360.2 195.3 L361.4 195.8 L362.6 195.4 L363.8 195.7 L365 195.7 L366.2 195.5 L366.6 309.1 L366.9 309.9 L367.9 309.8 L369.9 309.8 L371.9 310 L373.9 309.9 L374.4 309.9 L374.6 309.9 L374.9 260.9 L375.1 232.7 L375.4 216.4 L375.6 207 L375.9 201.5 L376.2 198.4 L376.4 196.6 L376.7 195.5 L376.9 194.9 L377.2 194.6 L377.8 195.7 L378.6 195.4 L379.8 195.6 L381 195.4 L382.2 195.7 L382.5 199.5 L382.9 196.5 L383.6 195.5 L384.9 195.5 L385.3 309.1 L385.6 309.9 L386.6 309.8 L388.6 309.8 L390.6 310 L392.6 310 L394.6 309.9 L395 309.9 L395.2 309.9 L395.5 260.9 L395.7 232.7 L396 216.4 L396.2 207 L396.5 201.5 L396.8 198.4 L397 196.6 L397.3 195.5 L397.5 194.9 L397.8 194.6 L398.4 195.7 L399.2 195.8 L400.4 195.3 L401.6 195.4 L402.8 195.5 L403.5 195.7 L403.8 199.5 L404.2 196.5 L404.9 195.5 L406.2 195.5 L406.6 309.1 L406.9 309.9 L407.9 310 L409.9 310 L411.9 309.9 L413.9 309.8 L415.9 309.9 L417.9 309.9 L419.9 310 L421.9 309.8 L423.9 310 L425.9 310 L427.9 310 L429.9 310 L431.9 309.9 L433.9 309.9 L435.9 309.9 L437.9 309.9 L439.9 310 L441.9 309.8 L443.9 309.8 L445.9 310 L447.9 309.8 L448.2 309.9 L448.4 309.9 L448.7 260.9 L448.9 232.7 L449.2 216.4 L449.4 207 L449.7 201.5 L450 198.4 L450.2 196.6 L450.5 195.5 L450.7 194.9 L451 194.6 L451.6 195.7 L452.4 195.3 L453.6 195.3 L453.8 195.7 L454.1 199.5 L454.5 196.5 L455.2 195.5 L456.5 195.5 L456.9 309.1 L457.2 309.9 L458.2 309.9 L460.2 309.9 L462.2 310 L464.2 310 L466.2 310 L468.2 309.8 L470.2 309.8 L472.2 309.8 L474.2 309.9 L476.2 309.9 L478.2 309.9 L480.2 309.8 L482.2 309.9 L484.2 309.9 L486.2 309.9 L488.2 310 L490.2 310 L492.2 309.9 L494.2 309.8 L496.2 310 L498.2 309.8 L500.2 309.9 L502.1 309.9 L502.3 309.9 L502.6 260.9 L502.8 232.7 L503.1 216.4 L503.3 207 L503.6 201.5 L503.9 198.4 L504.1 196.6 L504.4 195.5 L504.6 194.9 L504.9 194.6 L505.5 195.7 L506.3 195.5 L507.5 195.7 L508.7 195.4 L509.9 195.4 L510.1 195.7 L510.4 199.5 L510.8 196.5 L511.5 195.5 L512.8 195.5 L513.2 309.1 L513.5 309.9 L514.5 309.8 L516.5 309.8 L518.5 310 L520.5 309.9 L522.5 309.9 L524.5 309.9 L526.5 310 L528.5 309.9 L530.5 309.8 L532.5 310 L534.5 309.9 L536.5 310 L538.5 309.8 L540.5 309.9 L542.5 310 L544.5 310 L546.5 310 L548.5 309.8 L550.5 309.9 L552.5 309.8 L554.5 309.8 L555.1 309.9 L555.3 309.9 L555.6 260.9 L555.8 232.7 L556.1 216.4 L556.3 207 L556.6 201.5 L556.9 198.4 L557.1 196.6 L557.4 195.5 L557.6 194.9 L557.9 194.6 L558.5 195.7 L559.3 195.8 L560.5 195.6 L561.7 195.8 L562.9 195.5 L564.1 195.7 L565.3 195.5 L566.5 195.4 L567.7 195.7 L568.3 195.7 L568.6 199.5 L569 196.5 L569.7 195.5 L571 195.5 L571.4 309.1 L571.7 309.9 L572.7 309.9 L574.7 309.9 L576.7 309.9 L578.7 309.9 L579.2 309.9 L579.4 309.9 L579.7 261.5 L579.9 233.6 L580.2 217.5 L580.4 208.2 L580.7 202.8 L581 199.8 L581.2 198 L581.5 196.9 L581.7 196.3 L582 196 L582.4 195.6 L585.4 195.2 L588.4 194.9 L591.4 194.6 L594.4 194.3 L597.4 194.1 L600.4 193.9 L603.4 193.7 L606.4 193.5 L609.4 193.3 L612.4 193.2 L615.4 193.1 L618.4 192.9 L621.4 192.8 L624.4 192.7 L627.4 192.6 L630.4 192.6 L633.4 192.5 L636.4 192.4 L639.4 192.4 L642.4 192.3 L645.4 192.3 L648.4 192.2 L651.4 192.2 L654.4 192.1 L657.4 192.1 L660.4 192.1 L663.4 192.1 L666.4 192 L669.4 192 L672.4 192 L675.4 192 L678.4 192 L681.4 191.9 L684.4 191.9 L687.4 191.9 L690.4 191.9 L693.4 191.9 L696.4 191.9 L699.4 191.9 L702.4 191.9 L705.4 191.9 L708.4 191.9 L711.4 191.9 L714.4 191.8 L717.4 191.8 L720.4 191.8 L723.4 191.8 L726.4 191.8 L729.4 191.8 L732.4 191.8 L735.4 191.8 L738.4 191.8 L741.4 191.8 L744.4 191.8 L747.4 191.8 L750.4 191.8 L753.4 191.8 L756.4 191.8 L759.4 191.8 L762.4 191.8 L765.4 191.8 L768.4 191.8 L771.4 191.8 L774.4 191.8 L777.4 191.8 L780.4 191.8 L783.4 191.8 L786.4 191.8 L789.4 191.8 L792.4 191.8 L795.4 191.8 L798.4 191.8 L801.4 191.8 L804.4 191.8 L807.4 191.8 L810.4 191.8 L813.4 191.8 L816.4 191.8 L819.4 191.8 L822.4 191.8 L825.4 191.8 L828.4 191.8 L831.4 191.8 L834.4 191.8 L837.4 191.8 L840.4 191.8 L843.4 191.8 L846.4 191.8 L849.4 191.8 L850 191.8" stroke="#178c98" stroke-width="1.0" fill="none" stroke-linejoin="round"/>
<path d="M159.4 305.7 L161.4 306 L165.4 306.4 L166.4 306.5 M169.2 192.2 H174.2 M177.6 307.3 L179.6 307.5 L183.6 307.7 L187.5 307.9 M190.3 192.2 H195.5 M198.9 308.4 L200.9 308.5 L204.9 308.6 L208.9 308.8 L212.9 308.9 L216.9 309 L220.9 309.1 L224.9 309.2 L228.9 309.2 L232.9 309.3 L236.9 309.4 L240.9 309.4 L244.9 309.5 L248.9 309.5 L252.9 309.5 L256.9 309.6 L259.4 309.6 M262.2 195.8 H263.4 M264.1 309.6 L266.1 309.6 L270.1 309.7 L274.1 309.7 L278.1 309.7 L282.1 309.7 L286.1 309.8 L290.1 309.8 L294.1 309.8 L298.1 309.8 L302.1 309.8 L306.1 309.8 L310.1 309.8 L314.1 309.8 L318.1 309.8 L322.1 309.8 L326.1 309.8 L330.1 309.9 L334.1 309.9 L338.1 309.9 L342.1 309.9 L346.1 309.9 L350.1 309.9 L354.1 309.9 L356 309.9 M358.8 195.5 H366.2 M366.9 309.9 L368.9 309.9 L372.9 309.9 L374.4 309.9 M377.2 195.5 H382.2 M385.6 309.9 L387.6 309.9 L391.6 309.9 L395 309.9 M397.8 195.5 H403.5 M406.9 309.9 L408.9 309.9 L412.9 309.9 L416.9 309.9 L420.9 309.9 L424.9 309.9 L428.9 309.9 L432.9 309.9 L436.9 309.9 L440.9 309.9 L444.9 309.9 L448.2 309.9 M451 195.5 H453.8 M457.2 309.9 L459.2 309.9 L463.2 309.9 L467.2 309.9 L471.2 309.9 L475.2 309.9 L479.2 309.9 L483.2 309.9 L487.2 309.9 L491.2 309.9 L495.2 309.9 L499.2 309.9 L502.1 309.9 M504.9 195.5 H510.1 M513.5 309.9 L515.5 309.9 L519.5 309.9 L523.5 309.9 L527.5 309.9 L531.5 309.9 L535.5 309.9 L539.5 309.9 L543.5 309.9 L547.5 309.9 L551.5 309.9 L555.1 309.9 M557.9 195.5 H568.3 M571.7 309.9 L579.2 309.9" stroke="#22b2be" stroke-width="1.1" fill="none"/>
<path d="M2 41.2 H163.4 M579 41.2 H850" stroke="#d6cc1e" stroke-width="1.15" fill="none" opacity="0.9"/>
<path d="M2 191.4 H158.6 M640 191.8 H850" stroke="#22b2be" stroke-width="1.1" fill="none" opacity="0.9"/>
<path d="M3.6 156.2 H14.8 L20.3 162.3 L14.8 168.4 H3.6 Z" fill="#2c2808" stroke="#a39a14" stroke-width="1"/>
<text x="10" y="163.9" text-anchor="middle" font-family="Liberation Sans, sans-serif" font-size="4.4" font-weight="bold" fill="#a39a14">C 1</text>
<path d="M3.6 307.6 H14.8 L20.3 313.7 L14.8 319.8 H3.6 Z" fill="#08262a" stroke="#1792a0" stroke-width="1"/>
<text x="10" y="315.3" text-anchor="middle" font-family="Liberation Sans, sans-serif" font-size="4.4" font-weight="bold" fill="#1792a0">C 2</text>
<path d="M3.5 369.3 H14.5 L19.8 374.8 L14.5 380.3 H3.5 Z" fill="#c89af0" stroke="#c89af0" stroke-width="0.6"/>
<text x="10.3" y="376.3" text-anchor="middle" font-family="Liberation Sans, sans-serif" font-size="4.2" font-weight="bold" fill="#7a58a8">B1</text>
<text x="26" y="367" font-family="Liberation Sans, sans-serif" font-size="8.2" fill="#b882dc" stroke="#b882dc" stroke-width="0.25">I2C</text>
<rect x="26.2" y="370" width="18.6" height="9" fill="#2c2c2c" opacity="0.86"/>
<path d="M32.5 374.5 H38.5" stroke="#9a78a4" stroke-width="0.9"/>
<text x="6" y="401.3" font-family="Liberation Sans, sans-serif" font-size="12.4" textLength="26.2" lengthAdjust="spacingAndGlyphs" fill="#f4f4f4" stroke="#f4f4f4" stroke-width="0.3">SCLK</text>
<text x="6" y="423.4" font-family="Liberation Sans, sans-serif" font-size="12.4" textLength="22.2" lengthAdjust="spacingAndGlyphs" fill="#f4f4f4" stroke="#f4f4f4" stroke-width="0.3">SDA</text>
<text x="86.4" y="478.3" text-anchor="middle" font-family="Liberation Sans, sans-serif" font-size="6.6" fill="#a2a2a2">-120 µs</text>
<text x="171.3" y="478.3" text-anchor="middle" font-family="Liberation Sans, sans-serif" font-size="6.6" fill="#a2a2a2">-80 µs</text>
<text x="256.1" y="478.3" text-anchor="middle" font-family="Liberation Sans, sans-serif" font-size="6.6" fill="#a2a2a2">-40 µs</text>
<text x="340.9" y="478.3" text-anchor="middle" font-family="Liberation Sans, sans-serif" font-size="6.6" fill="#a2a2a2">0 s</text>
<text x="425.8" y="478.3" text-anchor="middle" font-family="Liberation Sans, sans-serif" font-size="6.6" fill="#a2a2a2">40 µs</text>
<text x="510.6" y="478.3" text-anchor="middle" font-family="Liberation Sans, sans-serif" font-size="6.6" fill="#a2a2a2">80 µs</text>
<text x="595.4" y="478.3" text-anchor="middle" font-family="Liberation Sans, sans-serif" font-size="6.6" fill="#a2a2a2">120 µs</text>
<text x="680.2" y="478.3" text-anchor="middle" font-family="Liberation Sans, sans-serif" font-size="6.6" fill="#a2a2a2">160 µs</text>
<text x="845.5" y="43.4" text-anchor="end" font-family="Liberation Sans, sans-serif" font-size="6.8" fill="#d0c61c" stroke="#d0c61c" stroke-width="0.15">4.80</text>
<text x="845.5" y="58.8" text-anchor="end" font-family="Liberation Sans, sans-serif" font-size="6.8" fill="#d0c61c" stroke="#d0c61c" stroke-width="0.15">4.20</text>
<text x="845.5" y="74" text-anchor="end" font-family="Liberation Sans, sans-serif" font-size="6.8" fill="#d0c61c" stroke="#d0c61c" stroke-width="0.15">3.60</text>
<text x="845.5" y="89.2" text-anchor="end" font-family="Liberation Sans, sans-serif" font-size="6.8" fill="#d0c61c" stroke="#d0c61c" stroke-width="0.15">3</text>
<text x="845.5" y="104.4" text-anchor="end" font-family="Liberation Sans, sans-serif" font-size="6.8" fill="#d0c61c" stroke="#d0c61c" stroke-width="0.15">2.40</text>
<text x="845.5" y="119.6" text-anchor="end" font-family="Liberation Sans, sans-serif" font-size="6.8" fill="#d0c61c" stroke="#d0c61c" stroke-width="0.15">1.80</text>
<text x="845.5" y="134.8" text-anchor="end" font-family="Liberation Sans, sans-serif" font-size="6.8" fill="#d0c61c" stroke="#d0c61c" stroke-width="0.15">1.20</text>
<text x="845.5" y="150" text-anchor="end" font-family="Liberation Sans, sans-serif" font-size="6.8" fill="#d0c61c" stroke="#d0c61c" stroke-width="0.15">600 m</text>
<text x="845.5" y="165.2" text-anchor="end" font-family="Liberation Sans, sans-serif" font-size="6.8" fill="#d0c61c" stroke="#d0c61c" stroke-width="0.15">0</text>
<text x="845.5" y="195.4" text-anchor="end" font-family="Liberation Sans, sans-serif" font-size="6.8" fill="#1fa6b2">4.80</text>
<text x="845.5" y="210.6" text-anchor="end" font-family="Liberation Sans, sans-serif" font-size="6.8" fill="#1fa6b2">4.20</text>
<text x="845.5" y="225.8" text-anchor="end" font-family="Liberation Sans, sans-serif" font-size="6.8" fill="#1fa6b2">3.60</text>
<text x="845.5" y="241" text-anchor="end" font-family="Liberation Sans, sans-serif" font-size="6.8" fill="#1fa6b2">3</text>
<text x="845.5" y="256.2" text-anchor="end" font-family="Liberation Sans, sans-serif" font-size="6.8" fill="#1fa6b2">2.40</text>
<text x="845.5" y="271.4" text-anchor="end" font-family="Liberation Sans, sans-serif" font-size="6.8" fill="#1fa6b2">1.80</text>
<text x="845.5" y="286.6" text-anchor="end" font-family="Liberation Sans, sans-serif" font-size="6.8" fill="#1fa6b2">1.20</text>
<text x="845.5" y="301.8" text-anchor="end" font-family="Liberation Sans, sans-serif" font-size="6.8" fill="#1fa6b2">600 m</text>
<text x="845.5" y="317" text-anchor="end" font-family="Liberation Sans, sans-serif" font-size="6.8" fill="#1fa6b2">0</text>
<path d="M830.3 29.4 H847 V46.2 Z" fill="#646464"/>
<circle cx="843.2" cy="33.2" r="1.9" fill="none" stroke="#d8d8d8" stroke-width="0.9"/>
<path d="M841.8 34.8 L838.6 38.2" stroke="#d8d8d8" stroke-width="1.1"/>
<path d="M336 26 H345.6 L340.8 31 Z" fill="#f08a1c"/>
<path d="M336.2 330.2 H345.4 V339.3 H342.6 L340.8 342.8 L339 339.3 H336.2 Z" fill="#000" stroke="#e2861c" stroke-width="1.2" stroke-linejoin="round"/>
<text x="340.8" y="337.6" text-anchor="middle" font-family="Liberation Sans, sans-serif" font-weight="bold" font-size="6.8" fill="#e2861c">T</text>
</svg>
<div id="wvbot1"></div><div id="wvbot2"></div>
<div class="abs" style="left:854.5px;top:242px;width:1.4px;height:1.4px;background:#5c5c5c;box-shadow:0 4.3px 0 #5c5c5c,0 8.6px 0 #5c5c5c"></div>

<div id="rp">
<div class="ttl">Add New...</div>
<div class="rbtn" style="left:3px;top:12px">Cursors</div>
<div class="rbtn" style="left:37.5px;top:12px">Note</div>
<div class="rbtn" style="left:3px;top:33.6px">Measure</div>
<div class="rbtn" style="left:37.5px;top:33.6px">Search</div>
<div class="rbtn two" style="left:3px;top:55.2px">Results<br>Table</div>
<div class="rbtn" style="left:37.5px;top:55.2px">Plot</div>
<div id="rpsep1"></div>
<div id="rpsep2"></div>
<div class="abs" style="left:3px;top:447.6px;width:31px;height:18px;border:1px solid #4a4440;border-radius:2.5px;background:linear-gradient(#333,#262626)"></div>
<svg class="abs" style="left:20px;top:455px" width="8" height="9" viewBox="0 0 8 9"><path d="M1 1 L4.6 6.6" stroke="#b8b8b8" stroke-width="1.5" stroke-linecap="round"/></svg>
<svg class="abs" style="left:46px;top:448px" width="18" height="19" viewBox="0 0 18 19">
<ellipse cx="9" cy="3.2" rx="6.4" ry="1.7" fill="none" stroke="#c8c8c8" stroke-width="1"/>
<path d="M2.8 4 L4.3 15.6 Q9 17.8 13.7 15.6 L15.2 4" fill="none" stroke="#c8c8c8" stroke-width="1.1"/>
<path d="M6.2 5.6 L6.8 15.6 M9 5.8 V16 M11.8 5.6 L11.2 15.6" fill="none" stroke="#b0b0b0" stroke-width="1"/>
</svg>
</div>

<div id="bb"></div>
<div class="badge" style="left:1.5px;width:43.5px"><div class="hd" style="background:#4f4a22;color:#dcd21e">Ch 1</div>
<div class="l" style="top:12px">600 m/div</div>
<svg class="abs" style="left:3.5px;top:19.5px" width="9" height="7" viewBox="0 0 9 7"><path d="M1 5.6 V4.2 A3.4 3.4 0 0 1 7.8 4.2 V5.6 M2.9 5.6 V4.4 A1.6 1.6 0 0 1 6 4.4 V5.6" fill="none" stroke="#444" stroke-width="0.8"/></svg>
<div class="l" style="top:30.6px">50 MHz</div>
<svg class="abs" style="left:36px;top:30px" width="7" height="6" viewBox="0 0 7 6"><path d="M0.6 0.8 H3 V4.6 H6.2" fill="none" stroke="#333" stroke-width="1.1"/><path d="M0.4 0.4 H3.2 V2.6 H0.4Z" fill="#333"/></svg>
</div>
<div class="badge" style="left:47.3px;width:43.9px"><div class="hd" style="background:#1f4b4c;color:#22c0cc">Ch 2</div>
<div class="l" style="top:12px">600 m/div</div>
<svg class="abs" style="left:3.5px;top:19.5px" width="9" height="7" viewBox="0 0 9 7"><path d="M1 5.6 V4.2 A3.4 3.4 0 0 1 7.8 4.2 V5.6 M2.9 5.6 V4.4 A1.6 1.6 0 0 1 6 4.4 V5.6" fill="none" stroke="#444" stroke-width="0.8"/></svg>
<div class="l" style="top:30.6px">50 MHz</div>
<svg class="abs" style="left:36px;top:30px" width="7" height="6" viewBox="0 0 7 6"><path d="M0.6 0.8 H3 V4.6 H6.2" fill="none" stroke="#333" stroke-width="1.1"/><path d="M0.4 0.4 H3.2 V2.6 H0.4Z" fill="#333"/></svg>
</div>
<div class="badge" style="left:93.4px;width:44px"><div class="hd" style="background:#cc96fa;color:#2c2040">Bus 1</div>
<div class="l" style="top:12px">I2C</div>
</div>

<div class="nbtn" style="left:366.3px"><i style="background:#de3e58"></i><b>3</b></div>
<div class="nbtn" style="left:388.1px"><i style="background:#86bc22"></i><b>4</b></div>
<div class="nbtn" style="left:409.9px"><i style="background:#ec8c1e"></i><b>5</b></div>
<div class="nbtn" style="left:431.7px"><i style="background:#2222c4"></i><b>6</b></div>
<div class="nbtn" style="left:453.5px"><i style="background:#de44bc"></i><b>7</b></div>
<div class="nbtn" style="left:475.3px"><i style="background:#0cc084"></i><b>8</b></div>
<div class="vsep" style="left:498.5px"></div>
<div class="nbtn t3" style="left:504.6px"><i style="background:#ec8c1e"></i><span>Add<br>New<br>Math</span></div>
<div class="nbtn t3" style="left:526.4px"><i style="background:#c4c4c4"></i><span>Add<br>New<br>Ref</span></div>
<div class="nbtn t3" style="left:548.2px"><i style="background:#b65ce8"></i><span>Add<br>New<br>Bus</span></div>
<div class="vsep" style="left:572.6px"></div>
<div class="nbtn t1" style="left:578.8px"><i style="background:#444"></i><span>DVM</span></div>
<div class="nbtn t1" style="left:602.6px"><i style="background:#444"></i><span>AFG</span></div>
<div class="vsep" style="left:626.5px"></div>

<div class="info" style="left:632.4px;width:89px"><div class="hd">Horizontal</div>
<div class="l" style="left:3px;top:12.4px">40 µs/div</div><div class="l" style="left:54.5px;top:12.4px">400 µs</div>
<div class="l" style="left:3px;top:21.3px">SR: 125 MS/s</div><div class="l" style="left:54.5px;top:21.3px">8 ns/pt</div>
<div class="l" style="left:3px;top:29.8px">RL: 50 kpts</div><div class="l" style="left:63.5px;top:29.8px">40%</div>
<svg class="abs" style="left:54.5px;top:30px" width="5" height="6" viewBox="0 0 5 6"><path d="M0.5 0.5 H4.5 V4 L2.5 5.6 L0.5 4 Z" fill="#e2861c"/><path d="M1.5 1.6 H3.5 M2.5 1.6 V3.8" stroke="#3a2408" stroke-width="0.7"/></svg>
</div>
<div class="info" style="left:727.2px;width:76.8px"><div class="hd">Trigger</div>
<div class="abs" style="left:3.5px;top:11.2px;width:13.6px;height:8px;border:1px solid #9c56d2;border-radius:2px;background:#d8a6f8;color:#30184a;font-size:6.6px;line-height:6.4px;text-align:center">B1</div>
<div class="l" style="left:22.5px;top:12.4px">I2C</div>
<div class="l" style="left:3.5px;top:21.3px">Address &amp; Data</div>
</div>
<div class="info" style="left:809.8px;width:73px"><div class="hd">Acquisition</div>
<div class="l" style="left:3px;top:12.4px">Auto,</div><div class="l" style="left:32px;top:12.4px">Analyze</div>
<div class="l" style="left:3px;top:21.3px">High Res: 16 bits</div>
<div class="l" style="left:3px;top:29.8px">494 Acqs</div>
</div>
<div id="trigd">Triggered</div>
<div id="bbline"></div>

<div id="tp">
<div class="hdr"><span>TRIGGER</span></div>
<svg class="abs" style="left:207.2px;top:3.2px" width="14" height="14" viewBox="0 0 14 14"><circle cx="7" cy="7" r="6.1" fill="none" stroke="#f0f0f0" stroke-width="1"/><text x="7" y="10.2" text-anchor="middle" font-family="Liberation Sans, sans-serif" font-weight="bold" font-size="8.8" fill="#f0f0f0">?</text></svg>
<div class="set"><span>SETTINGS</span></div>
<div class="body"></div>
<div class="lbl" style="left:6.5px;top:46.5px">Trigger Type</div>
<div class="dd" style="left:7.5px;top:57px;width:74.5px">Bus</div>
<div class="lbl" style="left:99.5px;top:46.5px">Source</div>
<div class="dd" style="left:100px;top:57px;width:74.5px">Bus 1 (I2C )</div>
<div class="lbl" style="left:6.5px;top:80.5px">Trigger On</div>
<div class="dd" style="left:7.5px;top:91px;width:74.5px">Address &amp; Data</div>
<div class="lbl" style="left:99.5px;top:80.5px">Direction</div>
<div class="seg" style="left:100.5px;top:91px"><div style="width:30.5px">Read</div><div class="on" style="width:32px">Write</div><div style="width:30.5px">Either</div></div>
<div class="lbl" style="left:6.5px;top:114px">Addressing Mode</div>
<div class="seg" style="left:8px;top:124.3px"><div class="on" style="width:32px">7-Bit</div><div style="width:32px">10-Bit</div></div>
<div class="lbl" style="left:94px;top:114px">Address</div>
<div class="fld" style="left:95.6px;top:124.4px;width:93.4px;height:20.4px">
 <div class="abs" style="left:65.5px;top:0;width:1px;height:20.4px;background:#c4c4c4"></div>
 <div class="abs" style="left:2.6px;top:2.8px;font-size:6.4px;color:#222">Binary</div>
 <div class="abs mono" style="left:2.8px;top:11px;font-size:7.2px;color:#1a1a1a;white-space:pre">101 0000</div>
 <div class="abs" style="left:69px;top:2.8px;font-size:6.4px;color:#222">Hex</div>
 <div class="abs mono" style="left:69px;top:11px;font-size:7.2px;color:#1a1a1a">50</div>
</div>
<div class="lbl" style="left:6.5px;top:174.5px">Data Bytes</div>
<div class="fld" style="left:8px;top:185px;width:54.6px;height:17px;background:#dedede;border:1px solid #bbb"><div class="abs" style="right:2.5px;top:4.2px;font-size:7.4px;color:#1a1a1a">1</div></div>
<div class="lbl" style="left:74.5px;top:174.5px">Data</div>
<div class="abs" style="left:75px;top:183.8px;width:150.6px;height:56.4px;border:1.2px solid #49aed2;border-radius:3px;background:#cbcbcb;overflow:hidden;box-shadow:0 0 1.5px #8fd4ee">
 <div class="abs" style="left:107.2px;top:0;width:43px;height:56px;background:#f5f5f5;border-left:1px solid #6fbfdc"></div>
 <div class="abs" style="left:3.4px;top:3.3px;font-size:6.4px;color:#222">Binary</div>
 <div class="abs mono" style="left:3.4px;top:14px;font-size:7.2px;color:#1a1a1a;white-space:pre">0000 0000</div>
 <div class="abs" style="left:110.6px;top:3.3px;font-size:6.4px;color:#222">Hex</div>
 <div class="abs mono" style="left:110.4px;top:13.2px;font-size:7.2px;color:#fff;-webkit-text-stroke:.2px #fff;background:#4a7ac8;line-height:8.4px;height:8.4px">00</div>
</div>
<div class="abs" style="left:75.4px;top:243.4px;width:7px;height:7.6px;border-radius:2px;background:#4a92e0;color:#fff;font-size:6.4px;font-weight:bold;text-align:center;line-height:7.6px">A</div>
<div class="lbl" style="left:87px;top:243.6px;font-size:7.2px">selects digit(s)</div>
<div class="abs" style="left:75.4px;top:254.2px;width:7px;height:7.6px;border-radius:2px;background:#4a92e0;color:#fff;font-size:6.4px;font-weight:bold;text-align:center;line-height:7.6px">B</div>
<div class="lbl" style="left:87px;top:254.4px;font-size:7.2px">sets its value</div>
<div class="mh"><span>MODE &amp; HOLDOFF</span></div>
<svg class="abs" style="left:104px;top:350px" width="22" height="10" viewBox="0 0 22 10"><path d="M1.5 0.6 H20 L15 4 L11 9.2 L7 4 Z" fill="#8c8c8c" opacity="0.9"/></svg>
<svg class="abs" style="left:215px;top:335px" width="8" height="10" viewBox="0 0 8 10"><path d="M1.6 1.2 L5.8 5 L1.6 8.8" fill="none" stroke="#262626" stroke-width="1.7"/></svg>
</div>

</div>
</body></html>
